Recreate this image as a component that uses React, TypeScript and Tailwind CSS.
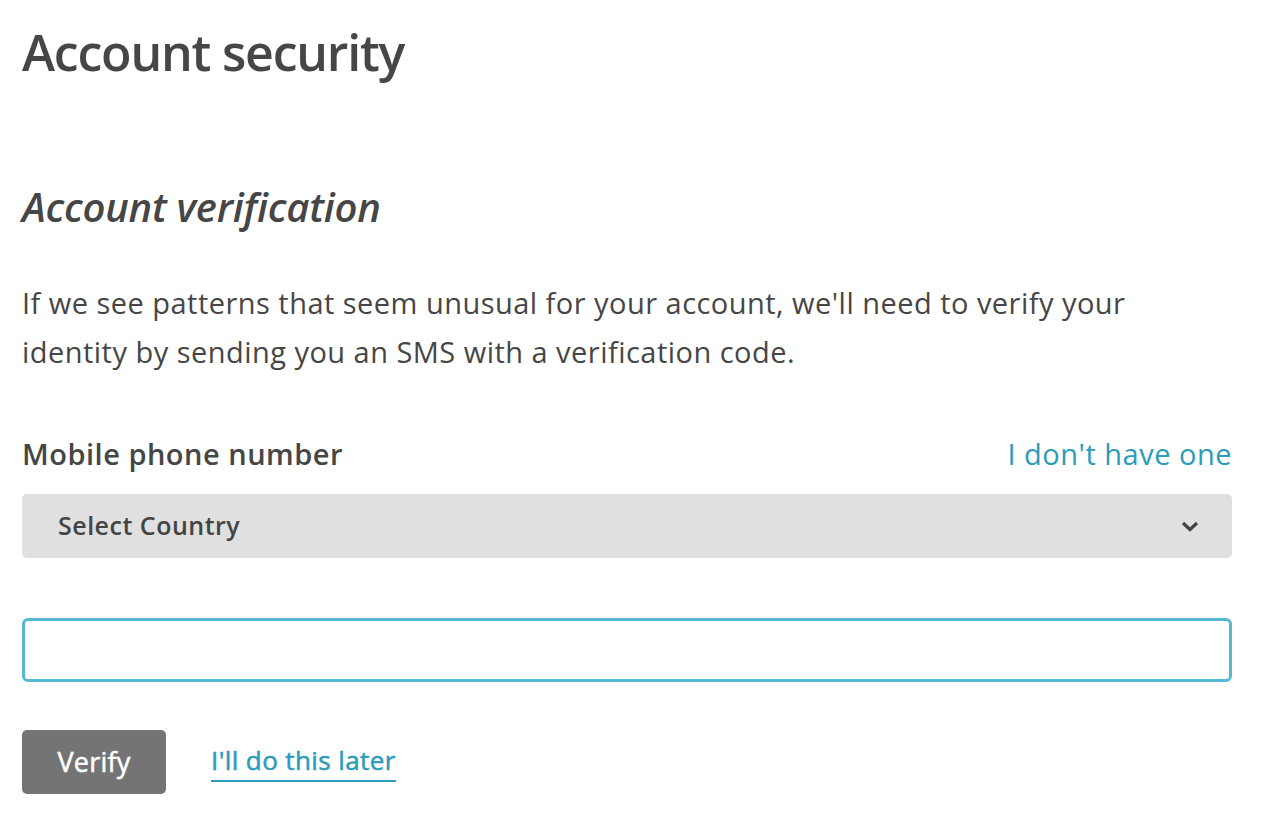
import React from "react";

export default function App() {
  return (
    <div
      className="min-h-[828px] w-full bg-white text-[#464646]"
      style={{ fontFamily: '"Open Sans", sans-serif' }}
    >
      <div className="w-[1210px] ml-[22px]">
        <h1 className="text-[50px] leading-[60px] font-semibold pt-[22px] tracking-[-1.2px]">
          Account security
        </h1>
        <h2 className="mt-[100px] text-[40px] leading-[50px] font-semibold italic tracking-[-0.25px]">
          Account verification
        </h2>
        <p className="mt-[46px] text-[29px] leading-[49px] tracking-[0.47px] max-w-[1160px]">
          If we see patterns that seem unusual for your account, we'll need to verify your identity by sending you an SMS with a verification code.
        </p>
        <div className="mt-[58px] flex items-center justify-between">
          <label className="text-[29px] leading-[40px] font-semibold tracking-[0.5px]">Mobile phone number</label>
          <a className="text-[29px] leading-[40px] tracking-[0.5px] text-[#2b9cb9]" href="#">
            I don't have one
          </a>
        </div>
        <div className="mt-[20px] h-[64px] rounded-[5px] bg-[#e0e0e0] flex items-center justify-between pl-[36px] pr-[32px]">
          <span className="text-[25px] font-semibold tracking-[0.5px] text-[#444]">Select Country</span>
          <svg width="20" height="14" viewBox="0 0 20 14" className="text-[#444]">
            <path d="M3 4 L10 10.5 L17 4" fill="none" stroke="currentColor" strokeWidth="3.2" strokeLinecap="butt" />
          </svg>
        </div>
        <div className="mt-[60px] h-[64px] rounded-[6px] border-[3px] border-[#54bad4]" />
        <div className="mt-[48px] flex items-center gap-[45px]">
          <button className="h-[64px] w-[144px] rounded-[5px] bg-[#747474] text-white text-[27px] tracking-[0.2px] font-medium [-webkit-text-stroke:0.5px_#ffffff]">
            Verify
          </button>
          <a
            href="#"
            className="text-[26px] font-medium tracking-[0.4px] text-[#2b9cb9] border-b-[2px] border-[#2b9cb9] leading-[34px] pb-[3px] mt-[1px] [-webkit-text-stroke:0.5px_#2b9cb9]"
          >
            I'll do this later
          </a>
        </div>
      </div>
    </div>
  );
}
